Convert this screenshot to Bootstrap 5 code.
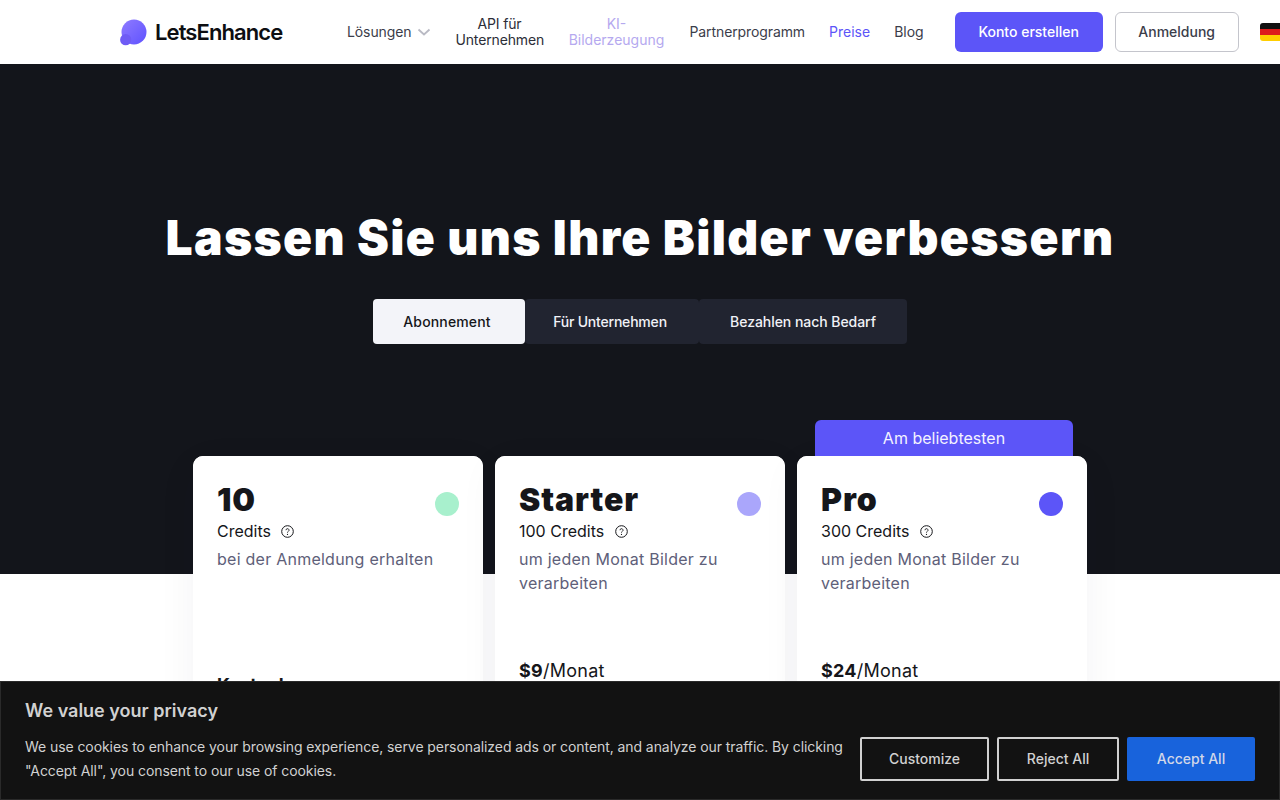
<!DOCTYPE html>
<html lang="de">
<head>
<meta charset="utf-8">
<title>LetsEnhance</title>
<link rel="stylesheet" href="https://cdn.jsdelivr.net/npm/bootstrap@5.3.0/dist/css/bootstrap.min.css">
<style>
html,body{height:800px;overflow:hidden}
body{font-family:Inter,"Liberation Sans",sans-serif;background:#fff;color:#15161a}
.topbar{height:64px;padding-left:120px;width:1280px;background:#fff;overflow:hidden}
.brand-name{font-size:22px;font-weight:600;letter-spacing:-.9px;color:#0d0e12;margin-left:8px;width:128px;line-height:1;flex:none}
.menu{margin-left:64px;gap:24px;font-size:14px;line-height:16px;color:#3b3d4a;flex:none}
.menu a{color:#3b3d4a;text-decoration:none;text-align:center;display:block;letter-spacing:-.1px}
.menu a.ki{color:#b5a9ef;width:98px;letter-spacing:0}
.menu a.pr{color:#5c55f8;letter-spacing:0}
.menu a.bl{letter-spacing:0}
.menu a.api{width:88px;color:#2c2e38;letter-spacing:-.15px}
.btn-make{width:148px;height:40px;background:#5c55f8;color:#fff;font-size:14px;font-weight:500;border:0;border-radius:6px;margin-left:31px;flex:none;padding:0 0 1px}
.btn-log{width:124px;height:40px;background:#fff;color:#3b3d4a;font-size:14px;font-weight:500;border:1px solid #c4c5cc;border-radius:6px;margin-left:12px;flex:none;padding:0 0 1px}
.flag{width:22px;height:18px;margin-left:21px;border-radius:3px;overflow:hidden;flex:none}
.flag i{display:block;height:33.4%}
.hero{height:510px;background:#13151b;padding-top:143px}
.hero h1{font-size:48px;line-height:62px;font-weight:900;color:#fff;letter-spacing:1.36px;margin:0;text-align:center}
.tabs{margin-top:30px;padding-left:373px}
.tabs span{display:block;height:45px;line-height:45px;font-size:14px;font-weight:500;background:#212430;color:#f1f2f7;text-align:center;border-radius:4px}
.tab1{width:152px;background:#f3f4f9!important;color:#15161a!important;padding-right:4px;letter-spacing:.15px}
.tab2{width:174px;letter-spacing:-.2px;padding-right:4px}
.tab3{width:208px;letter-spacing:-.05px}
.plans{margin-top:-118px;padding-left:193px;gap:12px;position:relative}
.plan{width:290px;height:344px;background:#fff;border-radius:10px 10px 0 0;padding:24px;box-shadow:0 10px 40px rgba(20,20,50,.05);position:relative}
.ribbon{position:absolute;left:18px;top:-36px;width:258px;height:46px;background:#5c55f8;color:#f3f2ff;border-radius:6px 6px 0 0;text-align:center;font-size:16px;line-height:36px}
.plan-body{position:relative;height:344px;background:#fff;margin:-24px;padding:25px 24px 0;border-radius:10px 10px 0 0}
.plan h2{font-size:32px;line-height:38px;font-weight:900;margin:0;letter-spacing:.9px;color:#15161a}
.dot{width:24px;height:24px;border-radius:50%;margin-top:11px;flex:none}
.cred{font-size:16px;line-height:24px;margin-top:0;color:#15161a}
.cred svg{margin-left:6px;vertical-align:-1px}
.desc{font-size:16px;line-height:24px;letter-spacing:.25px;color:#5e6079;margin-top:4px;height:72px}
.price{font-size:18px;line-height:24px;margin-top:40px;color:#15161a;letter-spacing:.25px}
.price b{font-weight:700}
.free{font-size:18px;line-height:24px;margin-top:54px;font-weight:700}
.consent{position:fixed;left:0;right:0;bottom:0;height:119px;background:#121212;border:1px solid #2a2a2a;padding:16px 24px 0;color:#d1d1d1}
.consent h3{font-size:18px;line-height:26px;font-weight:600;margin:0 0 11px;color:#d1d1d1}
.consent p{font-size:14px;line-height:24px;margin:0;width:830px;color:#d1d1d1;letter-spacing:-.075px}
.c-btns{gap:8px}
.c-btn{height:44px;font-size:14px;font-weight:500;background:transparent;color:#d1d1d1;border:2px solid #d1d1d1;border-radius:2px;padding:0 0 2px}
.c-a{width:129px}.c-b{width:122px}
.c-c{width:128px;background:#1863dc;border-color:#1863dc;color:#d1d7e8}
</style>
</head>
<body>
<nav class="topbar d-flex align-items-center">
  <svg width="27" height="27" viewBox="0 0 27 27" style="flex:none"><defs><linearGradient id="g" x1="0" y1="0" x2="1" y2="1"><stop offset="0" stop-color="#8f7bff"/><stop offset="1" stop-color="#5f52ff"/></linearGradient></defs><circle cx="14" cy="13" r="12.5" fill="url(#g)"/><circle cx="5.7" cy="20.7" r="5.6" fill="#6f5cf5"/></svg>
  <span class="brand-name">LetsEnhance</span>
  <div class="menu d-flex align-items-center">
    <a href="#" class="d-flex align-items-center">Lösungen<svg width="14" height="8" viewBox="0 0 14 8" style="margin-left:6px"><path d="M1.5 1.5 7 6.5 12.5 1.5" fill="none" stroke="#b9bac4" stroke-width="1.8"/></svg></a>
    <a href="#" class="api">API für Unternehmen</a>
    <a href="#" class="ki">KI-Bilderzeugung</a>
    <a href="#">Partnerprogramm</a>
    <a href="#" class="pr">Preise</a>
    <a href="#" class="bl">Blog</a>
  </div>
  <button class="btn-make">Konto erstellen</button>
  <button class="btn-log">Anmeldung</button>
  <div class="flag"><i style="background:#111"></i><i style="background:#dd1c1c"></i><i style="background:#ffce00"></i></div>
</nav>
<section class="hero">
  <h1>Lassen Sie uns Ihre Bilder verbessern</h1>
  <div class="tabs d-flex">
    <span class="tab1">Abonnement</span><span class="tab2">Für Unternehmen</span><span class="tab3">Bezahlen nach Bedarf</span>
  </div>
</section>
<section class="plans d-flex">
  <div class="plan">
    <div class="plan-body">
      <div class="d-flex justify-content-between"><h2>10</h2><div class="dot" style="background:#a8f0cd"></div></div>
      <div class="cred">Credits <svg width="13" height="13" viewBox="0 0 13 13"><circle cx="6.5" cy="6.5" r="5.8" fill="none" stroke="#15161a"/><path d="M5 5.2a1.5 1.5 0 1 1 2.2 1.3c-.5.3-.7.6-.7 1.1" fill="none" stroke="#15161a" stroke-width=".9"/><circle cx="6.5" cy="9.4" r=".6" fill="#15161a"/></svg></div>
      <div class="desc">bei der Anmeldung erhalten</div>
      <div class="free">Kostenlos</div>
    </div>
  </div>
  <div class="plan">
    <div class="plan-body">
      <div class="d-flex justify-content-between"><h2>Starter</h2><div class="dot" style="background:#aaa6fb"></div></div>
      <div class="cred">100 Credits <svg width="13" height="13" viewBox="0 0 13 13"><circle cx="6.5" cy="6.5" r="5.8" fill="none" stroke="#15161a"/><path d="M5 5.2a1.5 1.5 0 1 1 2.2 1.3c-.5.3-.7.6-.7 1.1" fill="none" stroke="#15161a" stroke-width=".9"/><circle cx="6.5" cy="9.4" r=".6" fill="#15161a"/></svg></div>
      <div class="desc">um jeden Monat Bilder zu verarbeiten</div>
      <div class="price"><b>$9</b>/Monat</div>
    </div>
  </div>
  <div class="plan">
    <div class="ribbon">Am beliebtesten</div>
    <div class="plan-body">
      <div class="d-flex justify-content-between"><h2>Pro</h2><div class="dot" style="background:#5c55f8"></div></div>
      <div class="cred">300 Credits <svg width="13" height="13" viewBox="0 0 13 13"><circle cx="6.5" cy="6.5" r="5.8" fill="none" stroke="#15161a"/><path d="M5 5.2a1.5 1.5 0 1 1 2.2 1.3c-.5.3-.7.6-.7 1.1" fill="none" stroke="#15161a" stroke-width=".9"/><circle cx="6.5" cy="9.4" r=".6" fill="#15161a"/></svg></div>
      <div class="desc">um jeden Monat Bilder zu verarbeiten</div>
      <div class="price"><b>$24</b>/Monat</div>
    </div>
  </div>
</section>
<aside class="consent">
  <h3>We value your privacy</h3>
  <p>We use cookies to enhance your browsing experience, serve personalized ads or content, and analyze our traffic. By clicking "Accept All", you consent to our use of cookies.</p>
  <div class="c-btns d-flex position-absolute" style="right:24px;top:55px">
    <button class="c-btn c-a">Customize</button><button class="c-btn c-b">Reject All</button><button class="c-btn c-c">Accept All</button>
  </div>
</aside>
</body>
</html>
